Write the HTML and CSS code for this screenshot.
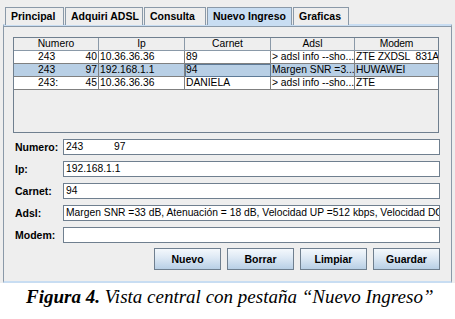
FILE: index.html
```html
<!DOCTYPE html>
<html>
<head>
<meta charset="utf-8">
<link rel="stylesheet" href="styles.css">
</head>
<body>
<div class="window">
  <div class="tabs">
    <div class="tab t1">Principal</div>
    <div class="tab t2">Adquiri ADSL</div>
    <div class="tab t3">Consulta</div>
    <div class="tab t4 selected">Nuevo Ingreso</div>
    <div class="tab t5">Graficas</div>
  </div>
  <div class="panel">
    <div class="tablebox">
      <div class="row head">
        <div class="c c1">Numero</div>
        <div class="c c2">Ip</div>
        <div class="c c3">Carnet</div>
        <div class="c c4">Adsl</div>
        <div class="c c5">Modem</div>
      </div>
      <div class="row">
        <div class="c c1 num"><span>243</span><span>40</span></div>
        <div class="c c2">10.36.36.36</div>
        <div class="c c3">89</div>
        <div class="c c4">&gt; adsl info --sho...</div>
        <div class="c c5">ZTE ZXDSL&nbsp; 831A</div>
      </div>
      <div class="row sel">
        <div class="c c1 num"><span>243</span><span>97</span></div>
        <div class="c c2">192.168.1.1</div>
        <div class="c c3 focus">94</div>
        <div class="c c4">Margen SNR =3...</div>
        <div class="c c5">HUWAWEI</div>
      </div>
      <div class="row">
        <div class="c c1 num"><span>243:</span><span>45</span></div>
        <div class="c c2">10.36.36.36</div>
        <div class="c c3">DANIELA</div>
        <div class="c c4">&gt; adsl info --sho...</div>
        <div class="c c5">ZTE</div>
      </div>
    </div>
    <div class="form">
      <div class="frow"><label>Numero:</label><div class="field"><span class="n1">243</span>97</div></div>
      <div class="frow"><label>Ip:</label><div class="field">192.168.1.1</div></div>
      <div class="frow"><label>Carnet:</label><div class="field">94</div></div>
      <div class="frow"><label>Adsl:</label><div class="field">Margen SNR =33 dB, Atenuación = 18 dB, Velocidad UP =512 kbps, Velocidad DOWN =2048 kbps</div></div>
      <div class="frow"><label>Modem:</label><div class="field"></div></div>
    </div>
    <div class="buttons">
      <div class="btn">Nuevo</div>
      <div class="btn">Borrar</div>
      <div class="btn">Limpiar</div>
      <div class="btn">Guardar</div>
    </div>
  </div>
</div>
<p class="caption"><b>Figura 4.</b> Vista central con pestaña “Nuevo Ingreso”</p>
</body>
</html>
```
FILE: styles.css
```css
* { box-sizing: border-box; }
body {
  margin: 0;
  background: #ffffff;
  font-family: "Liberation Sans", Arial, sans-serif;
  font-size: 10.3px;
  color: #000;
  width: 455px;
  overflow: hidden;
}
.window {
  background: #eeeeee;
  width: 455px;
  height: 283px;
  padding-top: 7px;
  padding-left: 3px;
}
.tabs {
  display: flex;
  height: 17px;
  padding-left: 2px;
}
.tab {
  height: 18px;
  border: 1px solid #8a99a8;
  border-bottom: none;
  font-weight: bold;
  font-size: 10.5px;
  line-height: 16px;
  padding: 0 0 0 5px;
  background: #eeeeee;
  margin-right: 1px;
  white-space: nowrap;
  overflow: hidden;
  position: relative;
  z-index: 1;
}
.t1 { width: 59px; }
.t2 { width: 78px; }
.t3 { width: 62px; }
.t4 { width: 85px; }
.t5 { width: 56px; }
.tab.selected { background: #c8ddf2; }
.panel {
  width: 449px;
  height: 259px;
  border: 1px solid #8a99a8;
  border-top: 2px solid #c8ddf2;
  border-bottom: 2px solid #c8ddf2;
  box-shadow: inset 0 1px 0 #8a99a8;
  padding: 11px 11px 0 9px;
}
.tablebox {
  width: 426px;
  height: 96px;
  border: 1px solid #6f7f8f;
  background: #eeeeee;
}
.row {
  display: flex;
  height: 13px;
  background: #fff;
  border-bottom: 1px solid #808080;
}
.row.head {
  background: #eeeeee;
  border-bottom: 1px solid #8a99a8;
}
.row.sel { background: #b8cfe5; }
.c {
  height: 13px;
  line-height: 12px;
  padding: 0 1px;
  white-space: nowrap;
  overflow: hidden;
  border-right: 1px solid #808080;
}
.head .c { text-align: center; border-right-color: #8a99a8; }
.c1 { width: 85px; }
.c2 { width: 86px; }
.c3 { width: 86px; }
.c4 { width: 84px; }
.c5 { width: 83px; border-right: none; letter-spacing: -0.15px; }
.num { display: flex; justify-content: space-between; padding: 0 1px 0 24px; }
.focus { outline: 1px solid #5e7a96; outline-offset: -1px; }
.form {
  margin-top: 6px;
  display: flex;
  flex-direction: column;
  gap: 6px;
}
.frow {
  display: flex;
  align-items: center;
  height: 16px;
}
.frow label {
  width: 51px;
  padding-left: 2px;
  font-weight: bold;
  font-size: 10.5px;
}
.field {
  flex: 0 0 377px;
  height: 16px;
  background: #fff;
  border: 1px solid #6f7f8f;
  line-height: 14px;
  padding-left: 2px;
  white-space: nowrap;
  overflow: hidden;
}
.n1 { display: inline-block; width: 48px; }
.buttons {
  display: flex;
  justify-content: flex-end;
  gap: 6px;
  margin-top: 5px;
}
.btn {
  width: 67px;
  height: 22px;
  border: 1px solid #6f7f8f;
  background: linear-gradient(#f4f8fc, #dce8f4 45%, #b8cfe5);
  font-weight: bold;
  font-size: 10.5px;
  text-align: center;
  line-height: 20px;
}
.caption {
  margin: 1px 0 0 26px;
  font-family: "Liberation Serif", "Times New Roman", serif;
  font-style: italic;
  font-size: 19px;
  line-height: 26px;
  white-space: nowrap;
}
```
